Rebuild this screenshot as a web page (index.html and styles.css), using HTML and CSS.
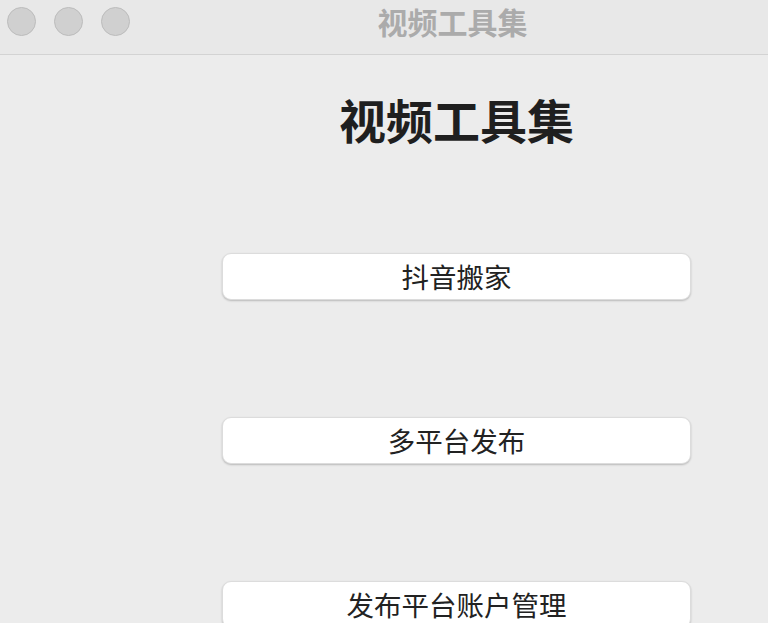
FILE: index.html
```html
<!DOCTYPE html>
<html lang="zh">
<head>
<meta charset="utf-8">
<title>视频工具集</title>
<link rel="stylesheet" href="styles.css">
</head>
<body>
<div class="window">
  <header class="titlebar">
    <div class="lights">
      <span class="light"></span>
      <span class="light"></span>
      <span class="light"></span>
    </div>
    <div class="title">视频工具集</div>
  </header>
  <main class="content">
    <h1 class="heading">视频工具集</h1>
    <div class="buttons">
      <button class="btn">抖音搬家</button>
      <button class="btn">多平台发布</button>
      <button class="btn">发布平台账户管理</button>
    </div>
  </main>
</div>
</body>
</html>
```
FILE: styles.css
```css
html, body {
  margin: 0;
  padding: 0;
  background: #ececec;
  font-family: "Noto Sans CJK SC", "Noto Sans", sans-serif;
  overflow: hidden;
}
.window {
  width: 768px;
  height: 623px;
  overflow: hidden;
}
.titlebar {
  height: 55px;
  box-sizing: border-box;
  background: #e8e8e8;
  border-bottom: 1px solid #d3d3d3;
  display: flex;
  align-items: flex-start;
}
.lights {
  display: flex;
  gap: 18px;
  padding: 7px 0 0 7px;
  width: 215px;
  flex: none;
}
.light {
  width: 27px;
  height: 27px;
  border-radius: 50%;
  background: #d0d0d0;
  border: 1px solid #bcbcbc;
}
.title {
  width: 469px;
  text-align: center;
  font-size: 30px;
  line-height: 30px;
  padding-top: 6px;
  font-weight: 700;
  color: #ababab;
  margin-left: -4px;
}
.content {
  padding-left: 222px;
  width: 469px;
}
.heading {
  margin: 41px 0 0 0;
  text-align: center;
  font-size: 47px;
  line-height: 46px;
  font-weight: 700;
  color: #1f1f1f;
}
.buttons {
  display: flex;
  flex-direction: column;
  gap: 117px;
  margin-top: 111px;
}
.btn {
  width: 469px;
  height: 47px;
  box-sizing: border-box;
  background: #ffffff;
  border: 1px solid #dcdcdc;
  border-radius: 9px;
  box-shadow: 0 1px 2px rgba(0, 0, 0, 0.22);
  font-family: "Noto Sans CJK SC", "Noto Sans", sans-serif;
  font-size: 27.5px;
  line-height: 45px;
  color: #222222;
  padding: 0;
  text-align: center;
}
```
